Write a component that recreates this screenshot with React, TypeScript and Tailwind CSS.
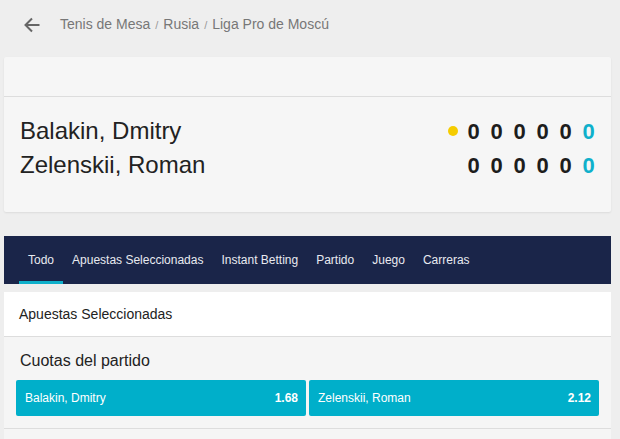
const font = { fontFamily: '"Liberation Sans", Arial, sans-serif' };

const scores = [
  { name: "Balakin, Dmitry", serving: true, points: [0, 0, 0, 0, 0], game: 0 },
  { name: "Zelenskii, Roman", serving: false, points: [0, 0, 0, 0, 0], game: 0 },
];

const tabs = ["Todo", "Apuestas Seleccionadas", "Instant Betting", "Partido", "Juego", "Carreras"];

export default function App() {
  return (
    <div className="min-h-[439px] w-[620px] bg-[#eeeeee] text-[#222]" style={font}>
      <header className="flex h-[57px] items-center pl-[24px] pb-[8px]">
        <svg width="16" height="16" viewBox="0 0 16 16" className="shrink-0">
          <path d="M15.5 8H1.5M8 1.5L1.5 8L8 14.5" fill="none" stroke="#666" strokeWidth="2" />
        </svg>
        <nav className="ml-[20px] flex items-baseline text-[14px] text-[#777]">
          <span>Tenis de Mesa</span>
          <span className="mx-[5px] text-[11px] text-[#999]">/</span>
          <span>Rusia</span>
          <span className="mx-[5px] text-[11px] text-[#999]">/</span>
          <span>Liga Pro de Moscú</span>
        </nav>
      </header>

      <section className="mx-[4px] w-[607px] rounded-[2px] bg-[#f6f6f6] shadow-[0_1px_2px_rgba(0,0,0,0.08)]">
        <div className="h-[40px] border-b border-[#dddddd]" />
        <div className="pt-[17px] pb-[30px] pl-[16px] pr-[16px]">
          {scores.map((row) => (
            <div key={row.name} className="flex h-[34px] items-center justify-between">
              <span className="text-[24px] text-[#222]">{row.name}</span>
              <div className="flex items-center gap-[10px] text-[22px] font-bold text-[#1d1d1d]">
                {row.serving && <span className="mr-[-1px] h-[10px] w-[10px] rounded-full bg-[#f5cc00]" />}
                {row.points.map((p, i) => (
                  <span key={i} className="w-[13px] text-center">{p}</span>
                ))}
                <span className="w-[13px] text-center text-[#0fb0cb]">{row.game}</span>
              </div>
            </div>
          ))}
        </div>
      </section>

      <nav className="mx-[4px] mt-[24px] flex h-[48px] w-[607px] bg-[#1a2549] pl-[15px]">
        {tabs.map((t, i) => (
          <div
            key={t}
            className={
              i === 0
                ? "flex items-center border-b-[3px] border-[#0fb0cb] px-[9px] pt-[3px] text-[12px] text-[#e8eaf0]"
                : "flex items-center px-[9px] text-[12px] text-[#e8eaf0]"
            }
          >
            {t}
          </div>
        ))}
      </nav>

      <div className="mx-[4px] mt-[8px] w-[607px]">
        <div className="flex h-[45px] items-center border-b border-[#dddddd] bg-white pl-[15px] text-[14px]">
          Apuestas Seleccionadas
        </div>
        <div className="border-b border-[#dddddd] bg-[#f5f5f5] px-[12px] pb-[12px]">
          <h3 className="pl-[4px] pt-[14px] pb-[10px] text-[16px] leading-[19px] text-[#222]">Cuotas del partido</h3>
          <div className="flex gap-[3px]">
            <button className="flex h-[36px] flex-1 items-center justify-between rounded-[2px] bg-[#00afca] pl-[9px] pr-[8px] text-[12px] text-white">
              <span>Balakin, Dmitry</span>
              <span className="font-bold">1.68</span>
            </button>
            <button className="flex h-[36px] flex-1 items-center justify-between rounded-[2px] bg-[#00afca] pl-[9px] pr-[8px] text-[12px] text-white">
              <span>Zelenskii, Roman</span>
              <span className="font-bold">2.12</span>
            </button>
          </div>
        </div>
        <div className="h-[20px] bg-[#f5f5f5]" />
      </div>
    </div>
  );
}
